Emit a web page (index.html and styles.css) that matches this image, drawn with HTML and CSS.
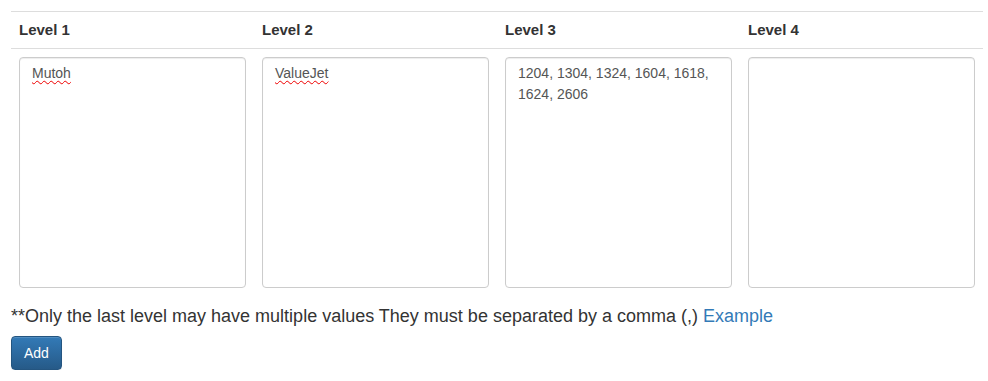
FILE: index.html
```html
<!DOCTYPE html>
<html lang="en">
  <head>
    <meta charset="UTF-8" />
    <title>Levels</title>
    <link rel="stylesheet" href="styles.css">
  </head>
  <body>
    <div class="wrap">
      <table class="levels">
        <thead>
          <tr>
            <th>Level 1</th>
            <th>Level 2</th>
            <th>Level 3</th>
            <th>Level 4</th>
          </tr>
        </thead>
        <tbody>
          <tr>
            <td><div class="field" role="textbox"><span class="misspelled">Mutoh</span></div></td>
            <td><div class="field" role="textbox"><span class="misspelled">ValueJet</span></div></td>
            <td><div class="field" role="textbox">1204, 1304, 1324, 1604, 1618, 1624, 2606</div></td>
            <td><div class="field" role="textbox"></div></td>
          </tr>
        </tbody>
      </table>

      <p class="note">**Only the last level may have multiple values They must be separated by a comma (,) <a href="#">Example</a></p>

      <button class="btn-primary">Add</button>
    </div>
  </body>
</html>
```

FILE: styles.css
```css
body {
  font-family: "Liberation Sans", Arial, sans-serif;
  color: #333;
  margin: 0;
}

.wrap {
  padding: 11px 5px 0 11px;
}

.levels {
  width: 972px;
  border-collapse: collapse;
  table-layout: fixed;
}

.levels th {
  text-align: left;
  font-size: 15px;
  font-weight: bold;
  line-height: 20px;
  padding: 8px;
  border-top: 1px solid #ddd;
  border-bottom: 1px solid #ddd;
}

.levels td {
  padding: 8px;
  vertical-align: top;
}

.field {
  box-sizing: border-box;
  height: 231px;
  padding: 5px 12px 6px;
  border: 1px solid #ccc;
  border-radius: 4px;
  box-shadow: inset 0 1px 1px rgba(0, 0, 0, 0.075);
  font-size: 14px;
  line-height: 21px;
  color: #555;
}

.misspelled {
  text-decoration: underline wavy #e00;
  text-decoration-thickness: 1px;
  text-underline-offset: 2px;
}

.note {
  font-size: 18px;
  line-height: 26px;
  margin: 7px 0 7px;
}

.note a {
  color: #337ab7;
  text-decoration: none;
}

.btn-primary {
  font-family: inherit;
  font-size: 14px;
  line-height: 20px;
  color: #fff;
  padding: 6px 12px;
  height: 34px;
  border: 1px solid #245580;
  border-radius: 4px;
  background: linear-gradient(to bottom, #337ab7 0, #265a88 100%);
  box-shadow: inset 0 1px 0 rgba(255, 255, 255, 0.15), 0 1px 1px rgba(0, 0, 0, 0.075);
  cursor: pointer;
}
```
